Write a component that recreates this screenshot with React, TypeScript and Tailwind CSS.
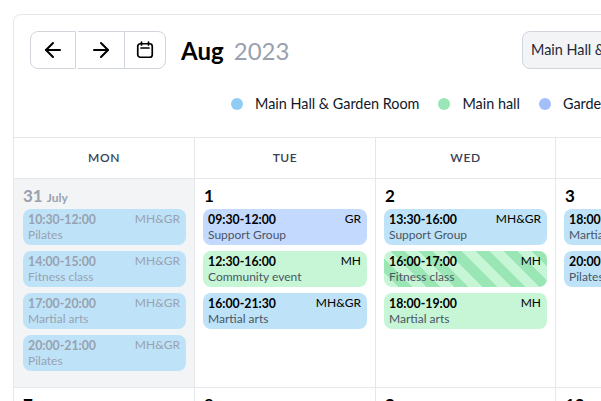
import { ArrowLeft, ArrowRight } from "lucide-react";

type Room = "both" | "main" | "garden" | "striped";

type Booking = {
  time: string;
  room: string;
  title: string;
  kind: Room;
};

const kindClass: Record<Room, string> = {
  both: "bg-[#bee3f8]",
  main: "bg-[#c6f6d5]",
  garden: "bg-[#c3dafe]",
  striped:
    "bg-[repeating-linear-gradient(45deg,#c6f6d5,#c6f6d5_10px,#9ae6b4_10px,#9ae6b4_20px)]",
};

const days = ["MON", "TUE", "WED", "THU", "FRI", "SAT", "SUN"];

const weekCols = "grid grid-cols-[181px_181px_180px_181px_181px_180px_181px]";

const weekOne: { day: string; suffix?: string; past?: boolean; bookings: Booking[] }[] = [
  {
    day: "31",
    suffix: "July",
    past: true,
    bookings: [
      { time: "10:30-12:00", room: "MH&GR", title: "Pilates", kind: "both" },
      { time: "14:00-15:00", room: "MH&GR", title: "Fitness class", kind: "both" },
      { time: "17:00-20:00", room: "MH&GR", title: "Martial arts", kind: "both" },
      { time: "20:00-21:00", room: "MH&GR", title: "Pilates", kind: "both" },
    ],
  },
  {
    day: "1",
    bookings: [
      { time: "09:30-12:00", room: "GR", title: "Support Group", kind: "garden" },
      { time: "12:30-16:00", room: "MH", title: "Community event", kind: "main" },
      { time: "16:00-21:30", room: "MH&GR", title: "Martial arts", kind: "both" },
    ],
  },
  {
    day: "2",
    bookings: [
      { time: "13:30-16:00", room: "MH&GR", title: "Support Group", kind: "both" },
      { time: "16:00-17:00", room: "MH", title: "Fitness class", kind: "striped" },
      { time: "18:00-19:00", room: "MH", title: "Martial arts", kind: "main" },
    ],
  },
  {
    day: "3",
    bookings: [
      { time: "18:00-19:00", room: "MH", title: "Martial arts", kind: "both" },
      { time: "20:00-21:00", room: "MH", title: "Pilates", kind: "both" },
    ],
  },
];

const weekTwo = ["7", "8", "9", "10", "11", "12", "13"];

function CalendarIcon() {
  return (
    <svg width="18" height="18" viewBox="0 0 18 18" fill="none" stroke="currentColor" strokeWidth="1.7" strokeLinecap="round">
      <rect x="1.75" y="2.75" width="14.5" height="13.5" rx="2.5" />
      <path d="M5.5 1v3M12.5 1v3M5 7h8" />
    </svg>
  );
}

function BookingCard({ booking, past }: { booking: Booking; past?: boolean }) {
  return (
    <div className={`h-9 rounded-lg pl-[5px] pr-[6px] py-0.5 ${kindClass[booking.kind]}`}>
      <div className={`flex justify-between leading-[17px] ${past ? "text-gray-400" : "text-black"}`}>
        <span className="text-[12.3px] font-bold">{booking.time}</span>
        <span className="text-xs">{booking.room}</span>
      </div>
      <div className={`text-xs leading-[13px] whitespace-nowrap ${past ? "text-gray-400" : "text-gray-600"}`}>
        {booking.title}
      </div>
    </div>
  );
}

function LegendItem({ color, label }: { color: string; label: string }) {
  return (
    <div className="flex items-center gap-3 whitespace-nowrap">
      <span className={`h-3 w-3 rounded-full ${color}`} />
      <span>{label}</span>
    </div>
  );
}

export default function App() {
  return (
    <div className="h-[401px] w-[601px] overflow-hidden bg-white font-['Lato','Noto_Sans',sans-serif] text-black">
      <div className="ml-[13px] mt-[14px] w-[1267px] rounded-tl-lg border border-gray-200">
        <div className="h-[123px] border-b border-gray-200 px-4 pt-4">
          <div className="flex h-[38px] items-center">
            <div className="flex h-[38px]">
              <button className="flex w-[46px] items-center justify-center rounded-l-lg border border-gray-300">
                <ArrowLeft size={24} strokeWidth={2} />
              </button>
              <button className="ml-0.5 flex w-[46px] items-center justify-center border-y border-gray-300">
                <ArrowRight size={24} strokeWidth={2} />
              </button>
              <button className="flex w-[42px] items-center justify-center rounded-r-lg border border-gray-300">
                <CalendarIcon />
              </button>
            </div>
            <h1 className="ml-[15px] mt-0.5 w-[341px] text-2xl">
              <span className="font-bold">Aug</span> <span className="ml-1 text-gray-400">2023</span>
            </h1>
            <div className="flex h-[38px] w-[220px] shrink-0 items-center rounded-lg border border-gray-300 bg-gray-100 px-2 text-[14.4px] whitespace-nowrap text-gray-800">
              Main Hall &amp; Garden Room
            </div>
          </div>
          <div className="mt-6 flex gap-[19px] pl-[201px] text-[14.4px] text-gray-900">
            <LegendItem color="bg-[#90cdf4]" label="Main Hall & Garden Room" />
            <LegendItem color="bg-[#9ae6b4]" label="Main hall" />
            <LegendItem color="bg-[#a3bffa]" label="Garden Room" />
          </div>
        </div>

        <div className={`${weekCols} border-b border-gray-200`}>
          {days.map((d) => (
            <div
              key={d}
              className="flex h-10 items-center justify-center border-r border-gray-200 text-xs font-semibold tracking-wider text-gray-700"
            >
              {d}
            </div>
          ))}
        </div>

        <div className={`${weekCols} h-[209px] border-b border-gray-200`}>
          {weekOne.map((cell) => (
            <div
              key={cell.day}
              className={`border-r border-gray-200 pr-2 pt-1 ${cell.past ? "bg-gray-100 pl-[9px]" : "pl-2"}`}
            >
              <div className={`h-[26px] text-[17px] font-bold ${cell.past ? "text-gray-400" : "pl-px"}`}>
                {cell.day}
                {cell.suffix && <span className="ml-1 text-xs">{cell.suffix}</span>}
              </div>
              <div className="flex flex-col gap-1.5">
                {cell.bookings.map((b) => (
                  <BookingCard key={b.time} booking={b} past={cell.past} />
                ))}
              </div>
            </div>
          ))}
          {[0, 1, 2].map((i) => (
            <div key={i} className="border-r border-gray-200" />
          ))}
        </div>

        <div className={weekCols}>
          {weekTwo.map((d) => (
            <div key={d} className="h-40 border-r border-gray-200 pl-[9px] pr-2 pt-1 text-[17px] font-bold">
              {d}
            </div>
          ))}
        </div>
      </div>
    </div>
  );
}
